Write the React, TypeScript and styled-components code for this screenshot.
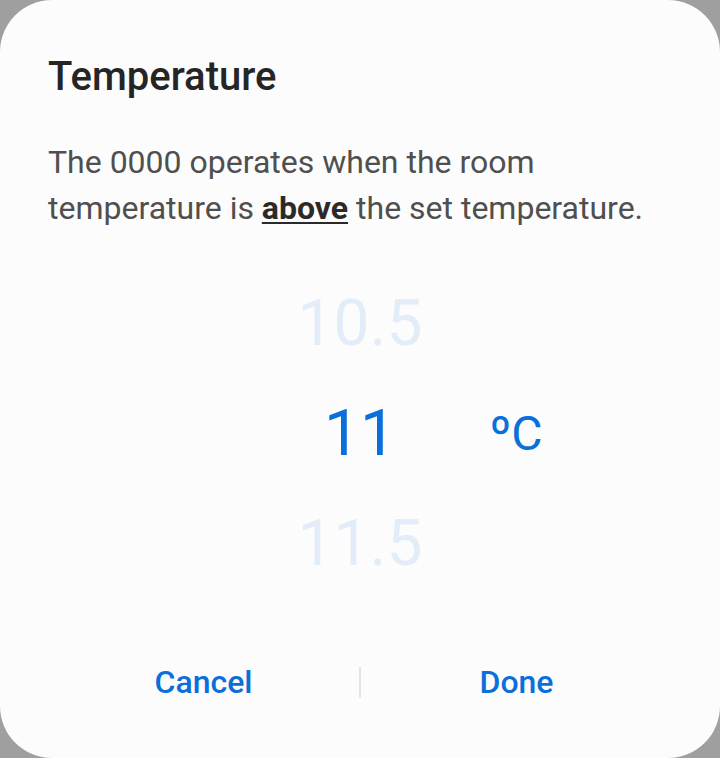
import React from "react";
import styled, { createGlobalStyle } from "styled-components";

const Global = createGlobalStyle`
  html, body { margin: 0; padding: 0; background: #9f9f9f; }
  body { font-family: Roboto, "Noto Sans", sans-serif; }
`;

const Dialog = styled.div`
  width: 720px;
  height: 758px;
  box-sizing: border-box;
  background: #fcfcfc;
  border-radius: 52px;
  padding: 54px 48px 0 48px;
  display: flex;
  flex-direction: column;
`;

const Title = styled.h1`
  margin: 0;
  font-size: 40px;
  line-height: 46px;
  font-weight: 500;
  color: #252525;
`;

const Message = styled.p`
  margin: 39px 0 0 0;
  font-size: 32px;
  line-height: 46px;
  font-weight: 400;
  color: #4f4f4f;
`;

const Emph = styled.span`
  font-weight: 700;
  color: #2a2a2a;
  text-decoration: underline;
  text-decoration-thickness: 2px;
  text-underline-offset: 3px;
`;

const Picker = styled.div`
  margin-top: 38px;
  display: grid;
  grid-template-columns: 152px 160px 152px;
  grid-template-rows: repeat(3, 110px);
  justify-content: center;
  align-items: center;
`;

const Value = styled.div<{ $active?: boolean }>`
  grid-column: 2;
  text-align: center;
  font-size: 64px;
  line-height: 110px;
  font-weight: 400;
  color: ${(p) => (p.$active ? "#0b6fd9" : "#e3edf8")};
`;

const Unit = styled.div`
  grid-column: 3;
  grid-row: 2;
  text-align: center;
  font-size: 48px;
  line-height: 110px;
  color: #0b6fd9;
`;

const Actions = styled.div`
  margin-top: 51px;
  height: 64px;
  display: flex;
  align-items: center;
`;

const Action = styled.button`
  flex: 1;
  height: 100%;
  border: none;
  background: transparent;
  font-family: Roboto, "Noto Sans", sans-serif;
  font-size: 32px;
  font-weight: 500;
  color: #0b6fd9;
  padding: 0;
  cursor: pointer;
`;

const Divider = styled.div`
  width: 2px;
  height: 31px;
  background: #e3e3e3;
`;

export default function App() {
  return (
    <>
      <Global />
      <Dialog>
        <Title>Temperature</Title>
        <Message>
          The 0000 operates when the room temperature is <Emph>above</Emph> the set temperature.
        </Message>
        <Picker>
          <Value style={{ gridRow: 1 }}>10.5</Value>
          <Value $active style={{ gridRow: 2 }}>11</Value>
          <Unit>ºC</Unit>
          <Value style={{ gridRow: 3 }}>11.5</Value>
        </Picker>
        <Actions>
          <Action>Cancel</Action>
          <Divider />
          <Action>Done</Action>
        </Actions>
      </Dialog>
    </>
  );
}
